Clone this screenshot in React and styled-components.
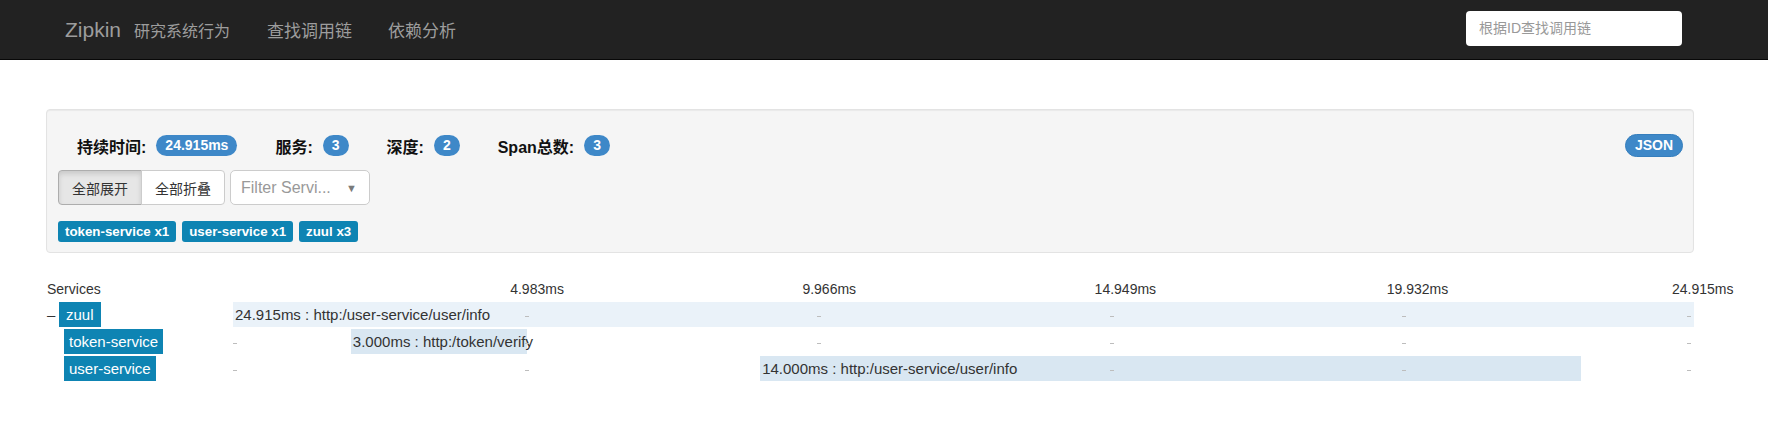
import React from 'react';
import styled, { createGlobalStyle } from 'styled-components';

const GlobalStyle = createGlobalStyle`
  html, body { margin: 0; padding: 0; background: #fff; }
  body {
    font-family: "Liberation Sans", Arial, "Noto Sans CJK SC", sans-serif;
    color: #333;
    font-size: 14px;
  }
  * { box-sizing: border-box; }
`;

const Navbar = styled.header`
  height: 60px;
  background: #222;
  border-bottom: 1px solid #080808;
  display: flex;
  align-items: center;
  padding: 0 86px 0 65px;
`;

const Brand = styled.div`
  display: flex;
  align-items: baseline;
  color: #9d9d9d;
`;

const BrandName = styled.span`
  font-size: 21px;
`;

const BrandSub = styled.span`
  font-size: 16px;
  margin-left: 13px;
`;

const NavLinks = styled.nav`
  display: flex;
  gap: 36px;
  margin-left: 37px;
`;

const NavLink = styled.a`
  font-size: 17px;
  color: #9d9d9d;
  text-decoration: none;
`;

const Spacer = styled.div`
  flex: 1;
`;

const SearchInput = styled.input`
  width: 216px;
  height: 35px;
  border: none;
  border-radius: 4px;
  padding: 0 13px;
  font-family: inherit;
  font-size: 14px;
  color: #555;
  background: #fff;
  margin-top: -3px;
  &::placeholder { color: #999; }
`;

const Main = styled.main`
  padding: 49px 0 0 46px;
  width: 1694px;
`;

const Well = styled.section`
  background: #f5f5f5;
  border: 1px solid #e3e3e3;
  border-radius: 4px;
  box-shadow: inset 0 1px 1px rgba(0, 0, 0, 0.05);
  padding: 24px 10px 10px 11px;
`;

const HeaderRow = styled.div`
  display: flex;
  align-items: center;
  height: 23px;
  padding-left: 19px;
`;

const Stat = styled.div`
  display: flex;
  align-items: center;
  gap: 10px;
  margin-right: 38px;
  font-size: 16px;
  font-weight: bold;
  color: #111;
`;

const Badge = styled.span`
  display: inline-block;
  height: 21px;
  line-height: 21px;
  padding: 0 9px;
  border-radius: 11px;
  background: #3e88c8;
  color: #fff;
  font-size: 14px;
  font-weight: bold;
`;

const JsonButton = styled.button`
  margin-left: auto;
  height: 23px;
  padding: 0 9px;
  border: 1px solid #357ebd;
  border-radius: 12px;
  background: #3e88c8;
  color: #fff;
  font-family: inherit;
  font-size: 14px;
  font-weight: bold;
  line-height: 21px;
`;

const ControlsRow = styled.div`
  display: flex;
  gap: 5px;
  margin-top: 13px;
`;

const ButtonGroup = styled.div`
  display: flex;
`;

const ToggleButton = styled.button`
  height: 35px;
  padding: 0 13px;
  font-family: inherit;
  font-size: 14px;
  color: #333;
  border: 1px solid ${p => (p.$active ? '#adadad' : '#ccc')};
  background: ${p => (p.$active ? '#e6e6e6' : '#fff')};
  box-shadow: ${p => (p.$active ? 'inset 0 3px 5px rgba(0,0,0,0.125)' : 'none')};
  border-radius: 4px 0 0 4px;
  & + & {
    margin-left: -1px;
    border-radius: 0 4px 4px 0;
  }
`;

const Select = styled.div`
  width: 140px;
  height: 35px;
  border: 1px solid #ccc;
  border-radius: 5px;
  background: #fff;
  padding: 0 12px 0 10px;
  display: flex;
  align-items: center;
  justify-content: space-between;
  font-size: 16px;
  color: #999;
`;

const Caret = styled.span`
  font-size: 11px;
  color: #7a7a7a;
`;

const TagsRow = styled.div`
  display: flex;
  gap: 6px;
  margin-top: 16px;
`;

const Tag = styled.span`
  height: 21px;
  line-height: 21px;
  padding: 0 7px;
  border-radius: 3px;
  background: #0e84b3;
  color: #fff;
  font-size: 13.3px;
  font-weight: bold;
`;

const Timeline = styled.section`
  margin-top: 26px;
  width: 1648px;
`;

const Grid = styled.div`
  display: grid;
  grid-template-columns: 187px 1461px;
`;

const AxisRow = styled(Grid)`
  height: 20px;
  line-height: 20px;
  font-size: 14px;
  color: #333;
  margin-bottom: 3px;
`;

const ServicesHead = styled.div`
  padding-left: 1px;
`;

const Axis = styled.div`
  position: relative;
`;

const TimeLabel = styled.span`
  position: absolute;
  top: 0;
  margin-left: -15px;
  white-space: nowrap;
`;

const SpanRow = styled(Grid)`
  height: 25px;
  margin-bottom: 2px;
`;

const ServiceCell = styled.div`
  display: flex;
  align-items: center;
  padding-left: ${p => p.$indent}px;
  font-size: 15px;
`;

const Collapse = styled.span`
  width: 12px;
  color: #333;
  font-size: 15px;
  line-height: 25px;
`;

const ServiceName = styled.span`
  height: 25px;
  line-height: 25px;
  padding: 0 ${p => p.$pad}px;
  background: #0e84b3;
  color: #fff;
  font-size: 15px;
`;

const Track = styled.div`
  position: relative;
  height: 25px;
`;

const Bar = styled.div`
  height: 25px;
  line-height: 25px;
  padding-left: 2px;
  font-size: 15px;
  color: #333;
  white-space: nowrap;
  background: ${p => (p.$root ? '#eaf2f9' : '#d9e7f2')};
`;

const Tick = styled.span`
  position: absolute;
  top: 14px;
  width: 4px;
  height: 1px;
  background: #bdbdbd;
`;

const TOTAL = 24.915;
const tickLeft = i => (i === 5 ? 'calc(100% - 7px)' : `${i * 20}%`);
const axisLabels = ['4.983ms', '9.966ms', '14.949ms', '19.932ms', '24.915ms'];

const spans = [
  { service: 'zuul', root: true, start: 0, dur: 24.915, text: '24.915ms : http:/user-service/user/info', pad: 7 },
  { service: 'token-service', start: 2.01, dur: 3.0, text: '3.000ms : http:/token/verify', pad: 5 },
  { service: 'user-service', start: 8.99, dur: 14.0, text: '14.000ms : http:/user-service/user/info', pad: 5 },
];

export default function App() {
  return (
    <>
      <GlobalStyle />
      <Navbar>
        <Brand>
          <BrandName>Zipkin</BrandName>
          <BrandSub>研究系统行为</BrandSub>
        </Brand>
        <NavLinks>
          <NavLink href="#">查找调用链</NavLink>
          <NavLink href="#">依赖分析</NavLink>
        </NavLinks>
        <Spacer />
        <SearchInput placeholder="根据ID查找调用链" />
      </Navbar>
      <Main>
        <Well>
          <HeaderRow>
            <Stat>持续时间: <Badge>24.915ms</Badge></Stat>
            <Stat>服务: <Badge>3</Badge></Stat>
            <Stat>深度: <Badge>2</Badge></Stat>
            <Stat>Span总数: <Badge>3</Badge></Stat>
            <JsonButton>JSON</JsonButton>
          </HeaderRow>
          <ControlsRow>
            <ButtonGroup>
              <ToggleButton $active>全部展开</ToggleButton>
              <ToggleButton>全部折叠</ToggleButton>
            </ButtonGroup>
            <Select>
              <span>Filter Servi...</span>
              <Caret>▼</Caret>
            </Select>
          </ControlsRow>
          <TagsRow>
            <Tag>token-service x1</Tag>
            <Tag>user-service x1</Tag>
            <Tag>zuul x3</Tag>
          </TagsRow>
        </Well>
        <Timeline>
          <AxisRow>
            <ServicesHead>Services</ServicesHead>
            <Axis>
              {axisLabels.map((l, i) => (
                <TimeLabel key={l} style={{ left: tickLeft(i + 1) }}>{l}</TimeLabel>
              ))}
            </Axis>
          </AxisRow>
          {spans.map(s => (
            <SpanRow key={s.service}>
              <ServiceCell $indent={s.root ? 1 : 18}>
                {s.root && <Collapse>–</Collapse>}
                <ServiceName $pad={s.pad}>{s.service}</ServiceName>
              </ServiceCell>
              <Track>
                <Bar
                  $root={s.root}
                  style={{
                    marginLeft: `${(s.start / TOTAL) * 100}%`,
                    width: `${(s.dur / TOTAL) * 100}%`,
                  }}
                >
                  {s.text}
                </Bar>
                {[0, 1, 2, 3, 4, 5]
                  .filter(i => !(i === 0 && s.start === 0))
                  .map(i => (
                    <Tick key={i} style={{ left: tickLeft(i) }} />
                  ))}
              </Track>
            </SpanRow>
          ))}
        </Timeline>
      </Main>
    </>
  );
}
